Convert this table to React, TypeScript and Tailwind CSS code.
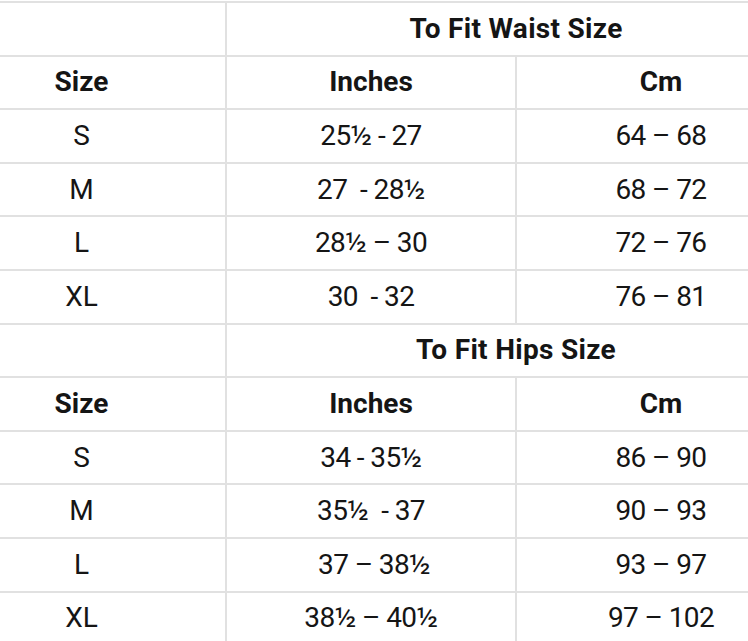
import React from 'react';

type Row = { size: string; inches: string; cm: string };

const waist: Row[] = [
  { size: 'S', inches: '25½ - 27', cm: '64 – 68' },
  { size: 'M', inches: '27 \u00a0- 28½', cm: '68 – 72' },
  { size: 'L', inches: '28½ – 30', cm: '72 – 76' },
  { size: 'XL', inches: '30 \u00a0- 32', cm: '76 – 81' },
];

const hips: Row[] = [
  { size: 'S', inches: '34 - 35½', cm: '86 – 90' },
  { size: 'M', inches: '35½ \u00a0- 37', cm: '90 – 93' },
  { size: 'L', inches: '\u00a037 – 38½', cm: '93 – 97' },
  { size: 'XL', inches: '38½ – 40½', cm: '97 – 102' },
];

const cell = 'h-[53.6px] flex items-center justify-center border-t-2 border-[#e1e1e1]';

const Section: React.FC<{ title: string; rows: Row[] }> = ({ title, rows }) => (
  <>
    <div className={cell} />
    <div className={`${cell} col-span-2 border-l-2 font-bold tracking-[0.3px]`}>{title}</div>
    <div className={`${cell} font-bold`}>Size</div>
    <div className={`${cell} border-l-2 font-bold`}>Inches</div>
    <div className={`${cell} border-l-2 font-bold`}>Cm</div>
    {rows.map((r) => (
      <React.Fragment key={r.size}>
        <div className={cell}>{r.size}</div>
        <div className={`${cell} border-l-2 whitespace-pre tracking-[-0.6px]`}>{r.inches}</div>
        <div className={`${cell} border-l-2 tracking-[-0.6px]`}>{r.cm}</div>
      </React.Fragment>
    ))}
  </>
);

export default function App() {
  return (
    <div className="w-[748px] h-[641px] overflow-hidden bg-white">
      <div className="mt-px ml-[-62px] w-[867px] grid grid-cols-[287px_290px_290px] text-[28px] text-[#151515] font-['Roboto',sans-serif] leading-none">
        <Section title="To Fit Waist Size" rows={waist} />
        <Section title="To Fit Hips Size" rows={hips} />
      </div>
    </div>
  );
}
